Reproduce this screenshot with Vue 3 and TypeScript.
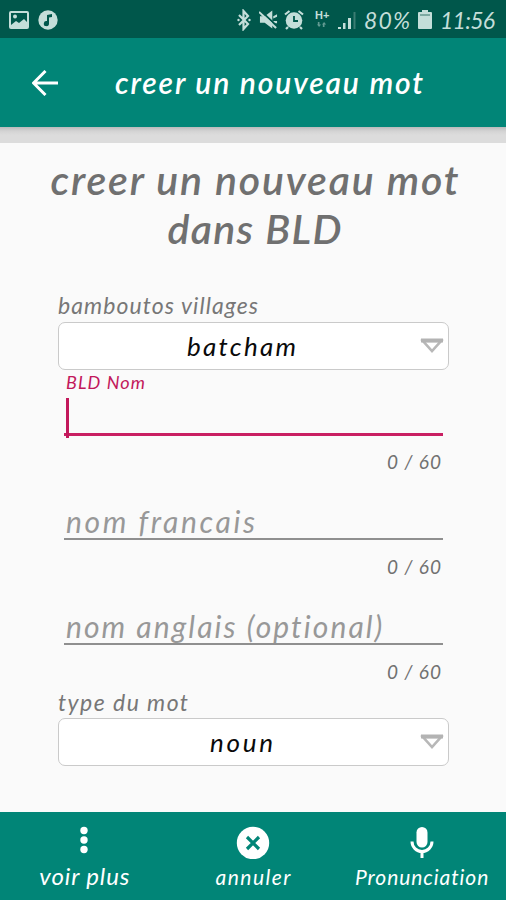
<script setup lang="ts">
import { ref, nextTick } from 'vue'

interface Field {
  label: string
  width: number
}

const fields: Field[] = [
  { label: 'nom francais', width: 189 },
  { label: 'nom anglais (optional)', width: 316 },
]
const maxLength = 60
const typed = ref('')

// Spreads a line's letters so that it takes the given width.
const vFit = {
  mounted(el: HTMLElement, binding: { value: number }) {
    nextTick(() => {
      const gaps = (el.textContent ?? '').trim().length - 1
      const spacing = (binding.value - el.getBoundingClientRect().width) / gaps
      el.style.letterSpacing = `${spacing}px`
      el.style.marginRight = `${-spacing}px`
    })
  },
}
</script>

<template>
  <div class="screen">
    <div class="status">
      <svg class="s-image" viewBox="0 0 20 18"><path fill-rule="evenodd" d="M2 0h16q2 0 2 2v14q0 2-2 2H2q-2 0-2-2V2q0-2 2-2zM2 2v12l5-4 3 2 5-4 3 3V2z" /><circle cx="6" cy="5.500" r="2" /></svg>
      <svg class="s-music" viewBox="0 0 20 20"><circle cx="10" cy="10" r="9.700" /><path class="cut" d="M9 5l5-1v3l-3 .5v6a2.600 2.600 0 1 1-2-2.500z" /></svg>
      <span class="grow"></span>
      <svg class="s-bt" viewBox="0 0 14 22"><path class="line" d="M2 6l9 9-4.500 5V2L11 7l-9 9" /><circle cx="1.500" cy="11" r="1.200" /><circle cx="12.500" cy="11" r="1.200" /></svg>
      <svg class="s-mute" viewBox="0 0 20 20"><path d="M1 6h5l8-6v19l-8-6H1zM15 6l4-2v2.500l-4 2zM15 11h4v2.500h-4z" /><path class="slash" d="M1.500 0l18 17" /><path class="line" d="M0 1.500l18 17" /></svg>
      <svg class="s-alarm" viewBox="0 0 20 20"><circle cx="10" cy="10.500" r="8.300" /><path class="line" d="M1 4.500l4.500-3.500M19 4.500l-4.500-3.500M4 17l-2 2M16 17l2 2" /><path class="hand" d="M10 6v5h4" /></svg>
      <span class="network"><b>H+</b><svg viewBox="0 0 12 6"><path d="M3 0v3h2L2.500 6 0 3h1V0zM9 6V3h2L8.500 0 6 3h1v3z" /></svg></span>
      <svg class="s-signal" viewBox="0 0 18 18"><path d="M0 16h3v2H0zM5 12h2.500v6H5zM10 7h3v11h-3z" /><path class="faint" d="M15.500 1h2v17h-2z" /></svg>
      <span class="s-text s-percent"><span v-fit="46">80%</span></span>
      <svg class="s-battery" viewBox="0 0 14 19"><path d="M4 0h6v2h3q1 0 1 1v15q0 1-1 1H1q-1 0-1-1V3q0-1 1-1h3z" /><path class="low" d="M2 4h10v2H2z" /></svg>
      <span class="s-text s-clock"><span v-fit="55">11:56</span></span>
    </div>

    <header class="bar">
      <svg class="back" viewBox="0 0 26 26"><path d="M26 13H2M13.500 1L1.500 13l12 12" /></svg>
      <h1><span v-fit="308">creer un nouveau mot</span></h1>
    </header>
    <div class="shade"></div>

    <main>
      <h2>
        <span class="row"><span v-fit="408">creer un nouveau mot</span></span>
        <span class="row"><span v-fit="174">dans BLD</span></span>
      </h2>

      <div class="label"><span v-fit="200">bamboutos villages</span></div>
      <div class="select">
        <span v-fit="109">batcham</span>
        <svg viewBox="0 0 24 18"><path d="M3 4h18L12 14z" /><path class="top" d="M1 3.500h22" /></svg>
      </div>

      <div class="active">
        <div class="floating"><span v-fit="79">BLD Nom</span></div>
        <div class="input"><i class="caret"></i>{{ typed }}</div>
      </div>
      <div class="counter first"><span v-fit="54">{{ typed.length }} / {{ maxLength }}</span></div>

      <template v-for="field in fields" :key="field.label">
        <div class="empty"><span v-fit="field.width">{{ field.label }}</span></div>
        <div class="counter"><span v-fit="54">0 / {{ maxLength }}</span></div>
      </template>

      <div class="label type"><span v-fit="130">type du mot</span></div>
      <div class="select">
        <span v-fit="63">noun</span>
        <svg viewBox="0 0 24 18"><path d="M3 4h18L12 14z" /><path class="top" d="M1 3.500h22" /></svg>
      </div>
    </main>

    <nav>
      <div class="item large">
        <svg viewBox="0 0 34 34"><circle cx="17" cy="5.500" r="3.700" /><circle cx="17" cy="15" r="3.700" /><circle cx="17" cy="24.500" r="3.700" /></svg>
        <span v-fit="90">voir plus</span>
      </div>
      <div class="item">
        <svg viewBox="0 0 34 34"><circle cx="17" cy="18" r="16.200" /><path class="cross" d="M11 12l12 12M23 12l-12 12" /></svg>
        <span v-fit="75">annuler</span>
      </div>
      <div class="item">
        <svg viewBox="0 0 34 34"><rect x="11.500" y="2" width="11" height="20.500" rx="5.500" /><path class="stand" d="M7 16.500a10 10 0 0 0 20 0M17 26v7" /></svg>
        <span v-fit="133">Pronunciation</span>
      </div>
    </nav>
  </div>
</template>

<style>
body {
  margin: 0;
}
</style>

<style scoped>
.screen {
  width: 506px;
  height: 900px;
  display: flex;
  flex-direction: column;
  overflow: hidden;
  background: #fafafa;
  font-family: Lato, "Liberation Sans", sans-serif;
  font-style: italic;
  white-space: nowrap;
}
svg {
  display: block;
  flex: none;
}
.status {
  box-sizing: border-box;
  height: 38px;
  flex: none;
  display: flex;
  align-items: center;
  padding: 1px 9px 0;
  background: #00574b;
  color: #c4ded9;
}
.status svg {
  fill: #c4ded9;
}
.s-image { width: 20px; height: 18px; }
.s-music { width: 20px; height: 20px; margin-left: 9px; }
.grow { flex: 1; }
.s-bt { width: 14px; height: 22px; margin-right: 8px; }
.s-mute { width: 19px; height: 20px; margin-right: 6px; }
.s-alarm { width: 20px; height: 20px; margin-right: 11px; }
.status .line { fill: none; stroke: #c4ded9; stroke-width: 2.200; }
.status .cut { fill: #00574b; }
.status .slash { fill: none; stroke: #00574b; stroke-width: 2; }
.status .hand { fill: none; stroke: #00574b; stroke-width: 1.800; }
.status .low { fill: #7ca9a1; }
.status .faint { fill: #3b7d73; }
.network { width: 15px; height: 19px; margin-right: 8px; }
.network b {
  display: block;
  font: bold 11px/10px "Liberation Sans", sans-serif;
}
.network svg {
  width: 10px;
  height: 5px;
  margin: 2px 0 0 2px;
  opacity: 0.5;
}
.s-signal { width: 18px; height: 18px; }
.s-text {
  font-size: 23px;
  line-height: 38px;
}
.s-percent { width: 47px; margin-left: 8px; }
.s-battery { width: 14px; height: 19px; margin: 0 8px 0 7px; }
.s-clock { width: 58px; margin-right: -1px; }
.bar {
  height: 89px;
  flex: none;
  display: flex;
  align-items: center;
  background: #018577;
  color: #fff;
}
.back {
  width: 26px;
  height: 26px;
  margin: 0 56px 0 32px;
  fill: none;
  stroke: #fff;
  stroke-width: 3;
}
h1, h2 {
  margin: 0;
}
h1 {
  font-size: 30px;
  line-height: 91px;
  font-weight: 600;
  padding-left: 1px;
}
.shade {
  height: 16px;
  flex: none;
  background: linear-gradient(#b9babb, #d3d3d3 4px, #dcdcdc 8px);
}
main {
  flex: 1;
  padding: 12px 57px 0 58px;
}
h2 {
  height: 134px;
  margin: 0 -8px;
  color: #707070;
  font-size: 41px;
  font-weight: 600;
}
.row {
  display: flex;
  justify-content: center;
  line-height: 49px;
}
.row span {
  position: relative;
  left: 1px;
}
.label {
  height: 33px;
  line-height: 33px;
  font-size: 23px;
  color: #777;
}
.select {
  box-sizing: border-box;
  height: 48px;
  border: 1.500px solid #cacaca;
  border-radius: 7px;
  background: #fff;
  display: flex;
  align-items: center;
  justify-content: space-between;
  padding: 0 4px 0 128px;
  color: #0a0a0a;
  font-size: 26px;
  line-height: 46px;
}
.type + .select {
  padding-left: 151px;
}
.select svg {
  width: 24px;
  height: 18px;
  fill: #fff;
  stroke: #b8b8b8;
  stroke-width: 2.600;
}
.select .top {
  stroke: #b3b3b3;
  stroke-width: 4;
}
.active {
  height: 66px;
  padding: 0 6px;
  margin-bottom: 8px;
}
.floating {
  height: 24px;
  line-height: 24px;
  padding-left: 2px;
  font-size: 18px;
  color: #c2185b;
}
.input {
  box-sizing: border-box;
  height: 42px;
  padding: 4px 0 0 2px;
  border-bottom: 3px solid #c91f62;
}
.caret {
  display: block;
  width: 3px;
  height: 40px;
  background: #c2185b;
}
.counter {
  height: 34px;
  line-height: 34px;
  padding-right: 8px;
  display: flex;
  justify-content: flex-end;
  font-size: 19px;
  color: #717171;
}
.first {
  height: 35px;
  line-height: 35px;
}
.empty {
  box-sizing: border-box;
  height: 61px;
  margin: 0 6px 10px;
  padding: 24px 0 0 2px;
  border-bottom: 2px solid #8f8f8f;
  line-height: 36px;
  font-size: 30px;
  color: #989898;
}
.type {
  height: 29px;
  line-height: 27px;
}
nav {
  height: 88px;
  flex: none;
  display: grid;
  grid-template-columns: repeat(3, 1fr);
  background: #018577;
  color: #fff;
}
.item {
  display: flex;
  flex-direction: column;
  align-items: center;
  padding-top: 13px;
  font-size: 21px;
  line-height: 30px;
}
.item svg {
  width: 34px;
  height: 34px;
  margin-bottom: 3px;
  fill: #fff;
}
.item .cross {
  fill: none;
  stroke: #018577;
  stroke-width: 3.200;
}
.item .stand {
  fill: none;
  stroke: #fff;
  stroke-width: 3;
}
.large {
  font-size: 24px;
  line-height: 28px;
}
</style>
